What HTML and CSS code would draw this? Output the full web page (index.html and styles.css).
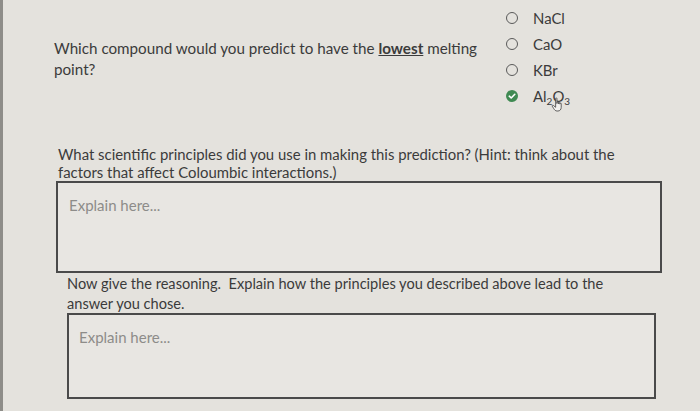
FILE: index.html
```html
<!DOCTYPE html>
<html>
<head>
<meta charset="utf-8">
<link rel="stylesheet" href="styles.css">
</head>
<body>
<div class="page">
  <div class="top">
    <p class="q1">Which compound would you predict to have the <u><b>lowest</b></u> melting<br>point?</p>
    <ul class="options">
      <li class="opt"><span class="radio"></span><span class="label">NaCl</span></li>
      <li class="opt"><span class="radio"></span><span class="label">CaO</span></li>
      <li class="opt"><span class="radio"></span><span class="label">KBr</span></li>
      <li class="opt"><span class="radio checked"><svg viewBox="0 0 12 12" width="12" height="12"><circle cx="6" cy="6" r="6" fill="#3f8a52"/><path d="M3.3 6.2 L5.2 8 L8.8 4.3" fill="none" stroke="#fff" stroke-width="1.6" stroke-linecap="round" stroke-linejoin="round"/></svg></span><span class="label">Al<sub>2</sub>O<sub>3</sub><svg class="cursor" viewBox="0 0 14 16" width="13" height="15"><path d="M5 1.5 C5 0.8 6.4 0.8 6.4 1.5 L6.4 7 L6.6 5.6 C6.7 5 8 5 8 5.7 L8 7.2 L8.2 6.2 C8.3 5.6 9.5 5.6 9.5 6.3 L9.5 7.6 L9.7 6.9 C9.8 6.3 11 6.3 11 7 L11 11 C11 13.5 9.5 15 7.5 15 L6.5 15 C4.8 15 4 14 3 12.5 L1.3 9.8 C0.9 9.1 1.9 8.4 2.5 9 L5 11 Z" fill="#f2f1ee" stroke="#444" stroke-width="0.9" stroke-linejoin="round"/></svg></span></li>
    </ul>
  </div>
  <p class="q2">What scientific principles did you use in making this prediction? (Hint: think about the<br>factors that affect Coloumbic interactions.)</p>
  <div class="box box1">Explain here...</div>
  <p class="q3">Now give the reasoning.&nbsp; Explain how the principles you described above lead to the<br>answer you chose.</p>
  <div class="box box2">Explain here...</div>
</div>
</body>
</html>
```
FILE: styles.css
```css
html, body {
  margin: 0;
  padding: 0;
}
body {
  background: #e4e2dd;
  font-family: "Lato", "Noto Sans", sans-serif;
  color: #3b3b3b;
  width: 700px;
  height: 411px;
  overflow: hidden;
}
.page {
  border-left: 3px solid #8e8d89;
  height: 411px;
  box-sizing: border-box;
  display: flex;
  flex-direction: column;
  align-items: flex-start;
}
.top {
  display: flex;
  align-items: flex-start;
}
.q1 {
  margin: 38px 0 0 51px;
  width: 452px;
  font-size: 15.2px;
  line-height: 21px;
}
.q1 b {
  font-weight: 700;
}
.options {
  list-style: none;
  margin: 0;
  padding: 5px 0 0 0;
}
.opt {
  height: 26px;
  display: flex;
  align-items: center;
  gap: 15px;
  font-size: 14.9px;
}
.radio {
  width: 12px;
  height: 12px;
  box-sizing: border-box;
  border: 1.5px solid #5a5a5a;
  border-radius: 50%;
  display: inline-block;
  flex: none;
}
.radio.checked {
  border: none;
}
.radio svg {
  display: block;
}
.label {
  position: relative;
}
.label sub {
  font-size: 10px;
  vertical-align: -3px;
  line-height: 0;
}
.cursor {
  position: absolute;
  left: 18px;
  top: 10px;
}
.q2 {
  margin: 36px 0 0 55px;
  font-size: 14.9px;
  line-height: 18px;
}
.box {
  box-sizing: border-box;
  border: 2px solid #4a4a4a;
  background: #e8e6e2;
  color: #8d8c89;
  font-size: 15px;
  line-height: 18px;
}
.box1 {
  margin-left: 53px;
  width: 606px;
  height: 92px;
  padding: 13px 11px;
}
.q3 {
  margin: 1px 0 0 64px;
  font-size: 14.6px;
  line-height: 19.5px;
}
.box2 {
  margin-left: 64px;
  width: 589px;
  height: 86px;
  padding: 13px 10px;
}
```
